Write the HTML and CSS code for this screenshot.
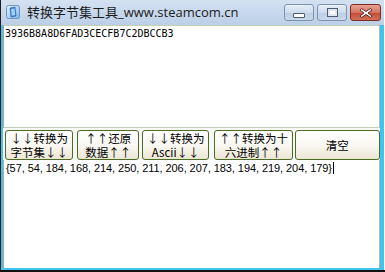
FILE: index.html
```html
<!DOCTYPE html>
<html lang="zh-CN">
<head>
  <meta charset="UTF-8">
  <title>转换字节集工具_www.steamcom.cn</title>
  <link rel="stylesheet" href="styles.css">
</head>
<body>
  <div class="window">
    <div class="frame">

      <!-- Title bar -->
      <div class="titlebar">
        <svg class="app-icon" width="16" height="16" viewBox="0 0 16 16">
          <defs>
            <linearGradient id="ig" x1="0" y1="0" x2="1" y2="1">
              <stop offset="0" stop-color="#e8f4ff"/>
              <stop offset="1" stop-color="#7fb3e6"/>
            </linearGradient>
          </defs>
          <rect x="1.5" y="1.5" width="13" height="13" rx="2" fill="url(#ig)" stroke="#6f95c2"/>
          <path d="M5 4 L10 3 L11 12 L6 13 Z" fill="#3d7fd0" stroke="#2a5f9f" stroke-width="0.6"/>
          <path d="M6 5 L9.5 4.4 L10.2 11 L6.8 11.7 Z" fill="#9fd0ff"/>
        </svg>
        <span class="title">转换字节集工具_www.steamcom.cn</span>
        <div class="caption-buttons">
          <div class="cap cap-min"><span class="min-glyph"></span></div>
          <div class="cap cap-max"><span class="max-glyph"></span></div>
          <div class="cap cap-close">
            <svg width="16" height="12" viewBox="0 0 16 12">
              <path d="M3.5 1.5 L8 4.5 L12.5 1.5 L14 3 L10 6 L14 9 L12.5 10.5 L8 7.5 L3.5 10.5 L2 9 L6 6 L2 3 Z" fill="#fff" stroke="#5a1c14" stroke-width="0.9" stroke-linejoin="round"/>
            </svg>
          </div>
        </div>
      </div>

      <!-- Client area -->
      <div class="client">
        <div class="edit edit-top mono">3936B8A8D6FAD3CECFB7C2DBCCB3</div>

        <div class="button-row">
          <button class="btn w1">↓↓转换为<br>字节集↓↓</button>
          <button class="btn w2">↑↑还原<br>数据↑↑</button>
          <button class="btn w3">↓↓转换为<br>Ascii↓↓</button>
          <button class="btn w4">↑↑转换为十<br>六进制↑↑</button>
          <button class="btn w5">清空</button>
        </div>

        <div class="edit edit-bottom">{57, 54, 184, 168, 214, 250, 211, 206, 207, 183, 194, 219, 204, 179}<span class="caret"></span></div>
      </div>

    </div>
  </div>
</body>
</html>
```

FILE: styles.css
```css
/* Reset */
* { margin: 0; padding: 0; box-sizing: border-box; }
html, body { width: 100%; height: 100%; background: #fff; }

/* Window frame */
.window { width: 385px; height: 272px; border-left: 1px solid #1c1c1c; border-bottom: 2px solid #111; padding-right: 1px; background: #fff; }
.frame { height: 270px; display: flex; flex-direction: column; background: #3fc4ee; }

/* Title bar */
.titlebar {
  height: 25px;
  display: flex;
  align-items: flex-start;
  background: linear-gradient(#d3e1f1, #bccfe7);
}
.app-icon { margin: 4px 0 0 4px; }
.title {
  margin: 3px 0 0 6px;
  font-family: "Open Sans", "Noto Sans CJK SC", sans-serif;
  font-size: 13px;
  line-height: 18px;
  color: #1b1b1b;
}
.caption-buttons { margin-left: auto; display: flex; gap: 3px; padding-top: 4px; padding-right: 3px; }
.cap {
  width: 30px; height: 17px;
  border: 1px solid #7d93b0;
  border-radius: 3px;
  display: flex; align-items: center; justify-content: center;
  background: linear-gradient(#e6eef8 0%, #cfdcec 50%, #bccde3 51%, #c9d8ea 100%);
}
.cap-close {
  width: 31px;
  border-color: #7a2c22;
  background: linear-gradient(#e9a393 0%, #d5735f 50%, #c14a33 51%, #d2705a 100%);
}
.min-glyph { width: 12px; height: 5px; margin-top: 5px; background: #fff; border: 1px solid #4a5b73; border-radius: 1px; }
.max-glyph { width: 11px; height: 9px; border: 1px solid #4a5b73; background: #fff; box-shadow: inset 0 0 0 2px #dfe7f1; }

/* Client */
.client { flex: 1; display: flex; flex-direction: column; margin: 0 4px 2px 2px; background: #f7f7f5; }
.edit { background: #fff; border-left: 1px solid #a9a9a0; border-right: 1px solid #b6b9a8; color: #000; }
.edit-top { height: 103px; border-top: 1px solid #c3cfb5; border-bottom: 1px solid #c3cfb5; padding: 2px 0 0 1px; }
.edit-bottom {
  flex: 1;
  padding: 2px 0 0 2px;
  font-family: "Liberation Sans", Arial, sans-serif;
  font-size: 11px;
  line-height: 12px;
  letter-spacing: -0.07px;
}
.mono { font-family: "DejaVu Sans Mono", "Liberation Mono", monospace; font-size: 10px; line-height: 12px; }
.caret { display: inline-block; width: 1px; height: 12px; margin-left: 1px; background: #000; vertical-align: top; }

/* Button row */
.button-row { height: 32px; display: flex; gap: 3px; padding: 2px 0 0 2px; }
.btn {
  height: 30px;
  padding: 0;
  border: 1px solid #4e6b24;
  border-radius: 3px;
  background: linear-gradient(#ffffff 0%, #f9f8f2 50%, #ebe6d4 100%);
  font-family: "Noto Sans CJK SC", sans-serif;
  font-size: 11.5px;
  line-height: 14px;
  color: #000;
  text-align: center;
  white-space: nowrap;
  overflow: hidden;
}
.w1 { width: 69px; }
.w2 { width: 62px; margin-left: 1px; }
.w3 { width: 68px; }
.w4 { width: 79px; margin-left: 2px; }
.w5 { width: 86px; margin-left: -1px; }
```
